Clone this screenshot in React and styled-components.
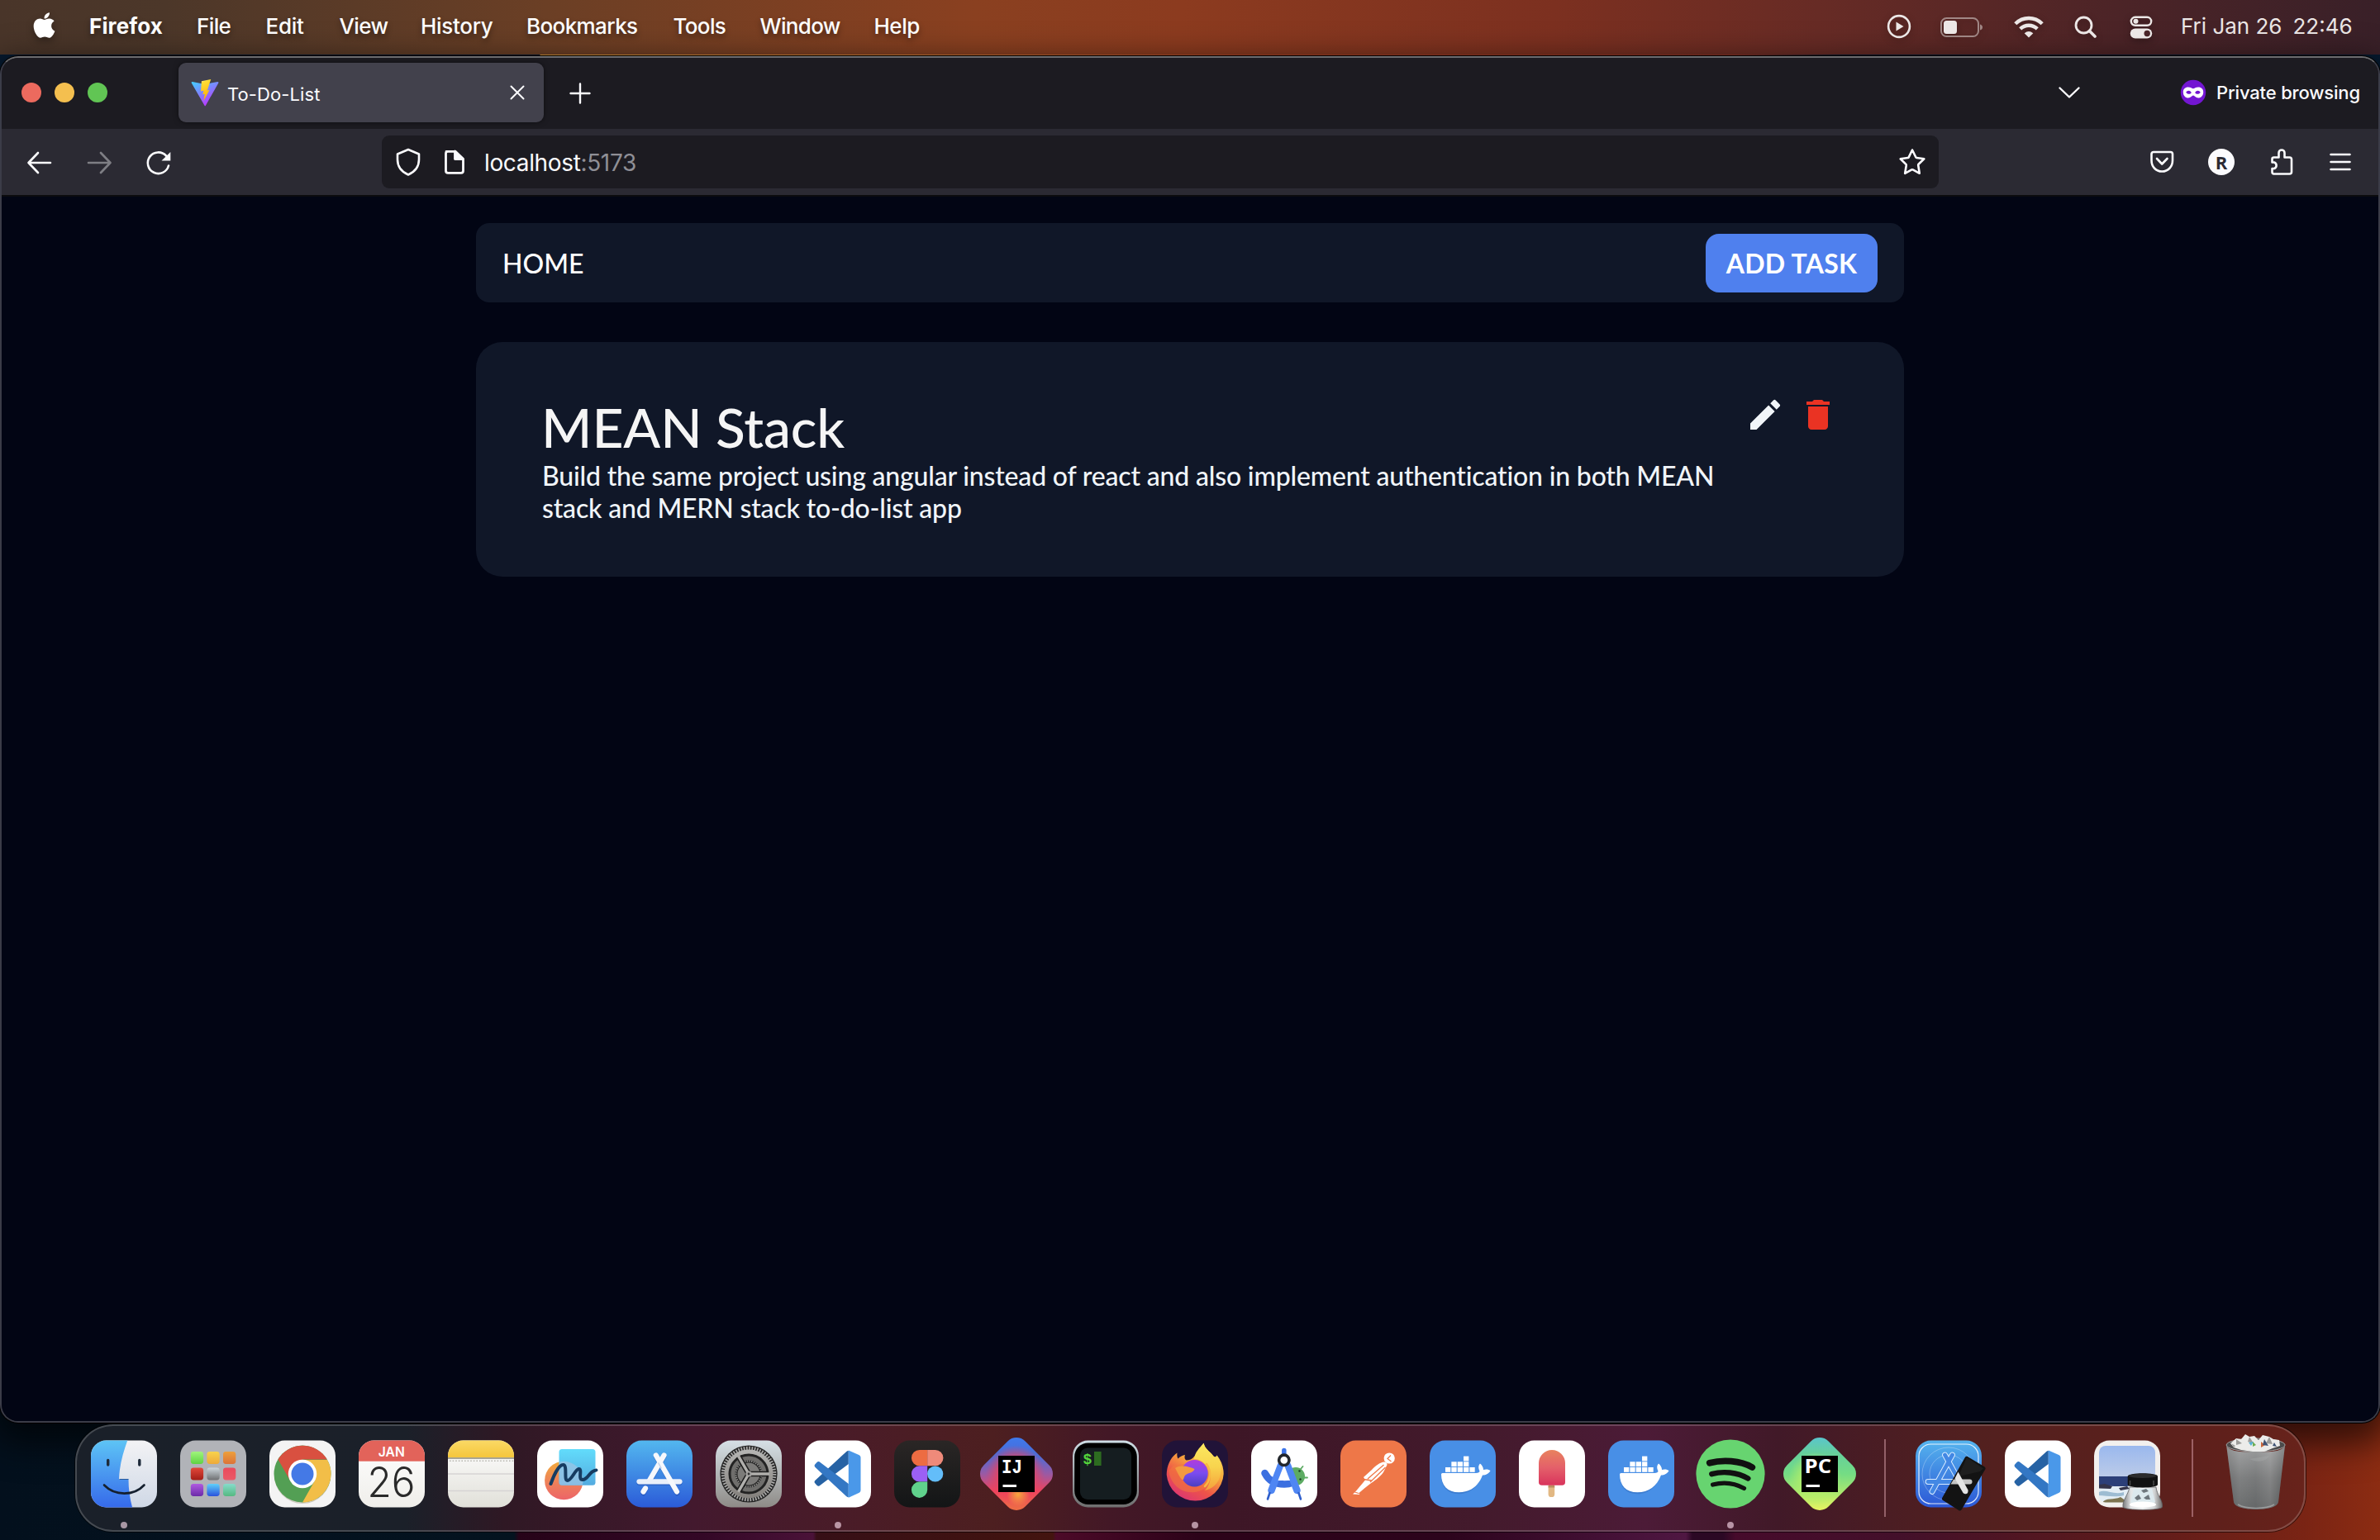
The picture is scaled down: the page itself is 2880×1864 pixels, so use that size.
import React from 'react';
import styled, { createGlobalStyle } from 'styled-components';
import { FaApple } from 'react-icons/fa';
import { MdEdit, MdDelete } from 'react-icons/md';

const GlobalStyle = createGlobalStyle`
  * { box-sizing: border-box; }
  html, body { margin: 0; padding: 0; background: #020515; }
  body { width: 2880px; height: 1864px; overflow: hidden; }
  svg { display: block; flex: none; }
`;

const Desktop = styled.div`
  display: flex;
  flex-direction: column;
  width: 2880px;
  height: 1864px;
  overflow: hidden;
  font-family: Inter, 'Liberation Sans', sans-serif;
  background:
    linear-gradient(90deg, #061a30 0 653px, #d9963a 654px, #d07a34 1100px, #a83e22 1500px, #8a2d20 2100px, #061a30 2230px) 0 0 / 100% 120px no-repeat,
    linear-gradient(90deg, #03101d 0, #04131f 622px, #260318 628px, #330826 850px, #4a1238 984px, #360f16 988px, #43140f 1274px, #4c0a28 1278px, #2c0319 1450px, #2c041c 1750px, #4f1742 2040px, #2b0824 2048px, #2b0824 2085px, #460b2b 2100px, #43102a 2300px, #5a1a1c 2550px, #7a2414 2790px, #8c2c12 2880px);
`;

/* ---------- menu bar ---------- */

const MenuBar = styled.header`
  display: flex;
  align-items: center;
  height: 66px;
  margin-bottom: 2px;
  flex: none;
  padding-left: 36px;
  color: #fff;
  background: linear-gradient(92deg, #493529 0, #4c3729 200px, #6b3f25 660px, #8a4020 1180px, #8c3b1f 1430px, #7c3020 1880px, #672b25 2200px, #4c2427 2560px, #392028 2880px);
`;

const MenuLogo = styled.div`
  width: 72px;
  height: 66px;
  padding-top: 13px;
  filter: drop-shadow(0 4px 5px rgba(0, 0, 0, 0.35));
`;

const MenuItem = styled.div`
  width: ${(p) => p.$w}px;
  margin-bottom: 2px;
  font-size: 26px;
  line-height: 64px;
  font-weight: ${(p) => (p.$strong ? 700 : 500)};
  letter-spacing: ${(p) => p.$ls}px;
  white-space: pre;
  text-shadow: 0 4px 7px rgba(0, 0, 0, 0.4);
`;

const StatusItems = styled.div`
  display: flex;
  align-items: center;
  margin-left: auto;
  height: 66px;
  color: #ece7e6;
`;

const StatusIcon = styled.div`
  width: ${(p) => p.$w}px;
  filter: drop-shadow(0 3px 4px rgba(0, 0, 0, 0.3));
`;

const Clock = styled.div`
  display: flex;
  width: 241px;
  margin-bottom: 3px;
  font-size: 26px;
  line-height: 60px;
  white-space: pre;
`;

const ClockPart = styled.span`
  width: ${(p) => p.$w}px;
`;

/* ---------- browser window ---------- */

const BrowserWindow = styled.main`
  display: flex;
  flex-direction: column;
  flex: none;
  height: 1654px;
  margin-bottom: 2px;
  border: 2px solid #3b3c48;
  border-top-color: #6c6c6f;
  border-radius: 22px;
  background: #1c1b21;
  box-shadow: 0 0 0 1px #000, 0 16px 40px 10px rgba(0, 0, 0, 0.6);
  overflow: hidden;
`;

const TabStrip = styled.div`
  display: flex;
  align-items: center;
  height: 86px;
  flex: none;
  padding: 0 22px 2px 24px;
  background: #1c1b21;
  color: #fbfbfe;
`;

const Lights = styled.div`
  display: flex;
  gap: 16px;
  width: 190px;
`;

const Light = styled.i`
  width: 24px;
  height: 24px;
  border-radius: 50%;
  background: ${(p) => p.$color};
`;

const Tab = styled.div`
  display: flex;
  align-items: center;
  width: 442px;
  height: 72px;
  padding: 0 21px 0 15px;
  border-radius: 9px;
  background: #42414c;
  box-shadow: 0 0 6px rgba(0, 0, 0, 0.5);
`;

const TabTitle = styled.span`
  flex: 1;
  padding: 4px 0 0 10px;
  font-size: 22px;
  letter-spacing: 0.1px;
`;

const NewTab = styled.div`
  margin-left: 31px;
  padding-top: 2px;
`;

const TabStripEnd = styled.div`
  display: flex;
  align-items: center;
  margin-left: auto;
`;

const BadgeBox = styled.div`
  margin-left: 119px;
`;

const PrivateLabel = styled.span`
  width: 174px;
  margin-left: 12px;
  font-size: 22px;
  font-weight: 500;
  letter-spacing: -0.17px;
  white-space: nowrap;
`;

const Toolbar = styled.div`
  display: flex;
  align-items: center;
  height: 82px;
  flex: none;
  padding: 0 30px 0 28px;
  background: #2b2a33;
  border-bottom: 2px solid #0c0c0f;
  color: #fbfbfe;
`;

const NavButtons = styled.div`
  display: flex;
  align-items: center;
  gap: 32px;
  width: 432px;
  padding-top: 2px;
`;

const UrlField = styled.div`
  display: flex;
  align-items: center;
  width: 1884px;
  height: 64px;
  padding: 0 12px;
  border-radius: 9px;
  background: #1c1b21;
`;

const Url = styled.span`
  flex: 1;
  margin-left: 12px;
  padding-top: 2px;
  font-size: 28px;
  letter-spacing: -0.35px;
`;

const Port = styled.span`
  color: #8f8f96;
`;

const Extensions = styled.div`
  display: flex;
  align-items: center;
  gap: 36px;
  margin-left: auto;
`;

const Avatar = styled.div`
  width: 32px;
  height: 32px;
  margin: 0 4px 0 1px;
  border-radius: 50%;
  background: #fbfbfe;
  color: #2b2a33;
  font: 700 22px/32px 'Open Sans', sans-serif;
  text-align: center;
`;

/* ---------- to-do page ---------- */

const Page = styled.section`
  flex: 1;
  display: flex;
  flex-direction: column;
  align-items: center;
  gap: 48px;
  padding-top: 32px;
  background: #020514;
  font-family: Lato, 'Liberation Sans', sans-serif;
  font-size: 32px;
  color: #f1f5f9;
`;

const NavBar = styled.nav`
  display: flex;
  align-items: center;
  justify-content: space-between;
  width: 1728px;
  height: 96px;
  padding: 0 32px;
  border-radius: 16px;
  background: #101728;
`;

const HomeLink = styled.a`
  padding-top: 2px;
  color: #fff;
  font-weight: 500;
  line-height: 48px;
`;

const AddButton = styled.button`
  width: 208px;
  height: 71px;
  padding: 2px 0 0;
  border: 0;
  border-radius: 16px;
  background: #4f80ee;
  color: #fff;
  font: 700 32px/48px Lato, sans-serif;
  letter-spacing: 0.25px;
  white-space: nowrap;
`;

const TaskCard = styled.article`
  display: flex;
  justify-content: space-between;
  width: 1728px;
  height: 284px;
  padding: 64px 80px;
  border-radius: 32px;
  background: #101728;
`;

const TaskText = styled.div`
  width: 1440px;
`;

const TaskTitle = styled.h1`
  margin: 0 0 1px -1px;
  font-size: 66px;
  line-height: 77px;
  font-weight: 500;
  letter-spacing: -0.15px;
  color: #f5f5f5;
`;

const TaskBody = styled.p`
  margin: 0;
  line-height: 39px;
  font-weight: 500;
  letter-spacing: -0.19px;
`;

const TaskActions = styled.div`
  display: flex;
  gap: 16px;
`;

/* ---------- dock ---------- */

const DockBar = styled.footer`
  display: flex;
  flex: none;
  width: 2699px;
  height: 130px;
  margin-left: 91px;
  padding: 4px 3px 0;
  border: 2px solid rgba(255, 255, 255, 0.19);
  border-radius: 46px;
  box-shadow: 0 0 0 1px rgba(0, 0, 0, 0.55);
  background: linear-gradient(90deg, #1a2029 0, #1b2029 400px, #2f1824 520px, #43192e 750px, #4a1c27 950px, #4d1f20 1110px, #431826 1250px, #3d1626 1400px, #431a2c 1700px, #4c1b37 1900px, #411928 2060px, #52201f 2300px, #5f201b 2600px, #68231b 2699px) border-box;
`;

const DockCell = styled.div`
  display: flex;
  flex-direction: column;
  align-items: center;
  width: 108px;
  height: 122px;
`;

const RunningDot = styled.i`
  width: 8px;
  height: 8px;
  margin-top: 4px;
  border-radius: 50%;
  background: rgba(255, 225, 240, 0.62);
`;

const DockDivider = styled.div`
  width: 2px;
  height: 94px;
  margin: 12px 22.5px 0 23.5px;
  background: rgba(225, 170, 180, 0.48);
`;

/* ---------- dock artwork (108 x 108 cells) ---------- */

const Art = ({ children }) => (
  <svg width="108" height="108" viewBox="0 0 108 108">{children}</svg>
);
const Tile = (props) => <rect x="14" y="13.5" width="80" height="81" rx="18.5" {...props} />;
const Grad = ({ id, from, to, mid }) => (
  <linearGradient id={id} x1="0" y1="0" x2="0" y2="1">
    <stop offset="0" stopColor={from} />
    {mid && <stop offset=".5" stopColor={mid} />}
    <stop offset="1" stopColor={to} />
  </linearGradient>
);

const Finder = () => (
  <Art>
    <defs>
      <Grad id="fiL" from="#5fc8f6" to="#3568ea" />
      <Grad id="fiR" from="#f3f3f5" to="#cfd8e6" />
      <clipPath id="fiC"><Tile /></clipPath>
    </defs>
    <Tile fill="url(#fiR)" />
    <path clipPath="url(#fiC)" fill="url(#fiL)" d="M10 10H59.5C54 25 48.5 42 48 60.5H59.5C59.5 72 61 84 64.500 96H10z" />
    <g stroke="#1e2a3a" strokeWidth="3.4" strokeLinecap="round" fill="none">
      <path d="M34.700 37.500V43M72.800 37.500V43" />
      <path stroke="#15202e" strokeWidth="2.6" d="M30 67.500C43 81 66 81 78.500 67.500" />
    </g>
    <path d="M48.500 60.500H59.500" stroke="#2a5a9a" strokeWidth="1" />
  </Art>
);

const launchColors = [
  ['#a0f47c', '#5fd343'], ['#f7d34c', '#eda93a'], ['#eda03c', '#dc7338'],
  ['#e2483a', '#a31e17'], ['#ccd6dc', '#6e7072'], ['#ea4a5c', '#ea5a68'],
  ['#b05ae0', '#6b2ba8'], ['#5fd0fa', '#2a52dc'], ['#86dccb', '#55b981'],
];
const Launchpad = () => (
  <Art>
    <Tile fill="#b1b3b8" />
    {launchColors.map(([a, b], i) => (
      <g key={i}>
        <defs><Grad id={`lp${i}`} from={a} to={b} /></defs>
        <rect x={26.8 + (i % 3) * 19.6} y={27 + Math.floor(i / 3) * 19.5} width="15.300" height="15" rx="3.400" fill={`url(#lp${i})`} />
      </g>
    ))}
  </Art>
);

const Chrome = () => (
  <Art>
    <Tile fill="#f4f4f4" />
    <circle cx="54" cy="56" r="34" fill="#8f8468" opacity=".35" />
    <circle cx="54" cy="54" r="34.500" fill="#539f54" />
    <path fill="#f2be48" d="M54 37H84A34.500 34.500 0 0 1 54 88.500L68.700 62.500z" />
    <path fill="#d95040" d="M24.500 36.500A34.500 34.500 0 0 1 83.800 36.500H54L39.300 62.500z" />
    <circle cx="54" cy="54" r="17.200" fill="#fff" />
    <circle cx="54" cy="54" r="13.500" fill="#4479e6" />
  </Art>
);

const Calendar = () => (
  <Art>
    <defs><clipPath id="caC"><Tile /></clipPath><Grad id="caB" from="#ffffff" to="#efeeea" /></defs>
    <Tile fill="url(#caB)" />
    <rect x="10" y="10" width="90" height="28.700" fill="#e2635a" clipPath="url(#caC)" />
    <text x="53.800" y="33.300" fontSize="16.500" fontWeight="600" textAnchor="middle" textLength="32" lengthAdjust="spacingAndGlyphs" fill="#fff" fontFamily="Inter">JAN</text>
    <text x="53.500" y="82" fontSize="50" fontWeight="300" textAnchor="middle" textLength="58" lengthAdjust="spacingAndGlyphs" fill="#2a2a2a" fontFamily="Inter">26</text>
  </Art>
);

const Notes = () => (
  <Art>
    <defs><clipPath id="noC"><Tile /></clipPath><Grad id="noB" from="#ffffff" to="#e1e0d9" /><Grad id="noY" from="#fbdc6c" to="#f5c63c" /></defs>
    <Tile fill="url(#noB)" />
    <g clipPath="url(#noC)">
      <rect x="10" y="10" width="90" height="24" fill="url(#noY)" />
      <rect x="10" y="34" width="90" height="2" fill="#a9a593" />
      <path d="M16 38.200H94" stroke="#b9b7b0" strokeWidth="1.600" strokeDasharray="1.600 2" />
      <path d="M10 54H98M10 74.500H98" stroke="#d6d4d4" strokeWidth="1.600" />
    </g>
  </Art>
);

const Freeform = () => (
  <Art>
    <defs><Grad id="frO" from="#f0aa3c" to="#ec6468" mid="#ee8458" /><Grad id="frB" from="#62dcfb" to="#54abe0" /></defs>
    <Tile fill="#fff" />
    <circle cx="46.300" cy="62" r="23.200" fill="url(#frO)" />
    <rect x="40.500" y="24" width="44" height="43.700" rx="3.500" fill="url(#frB)" />
    <path d="M40.500 39.600A23.200 23.200 0 0 1 68.800 67.700H44Q40.500 67.700 40.500 64z" fill="#9cc4e4" opacity=".75" />
    <path d="M30.500 66C34 56 40 43 45.500 43S46 62 50.500 62C56 62 60 48 64.500 48S63 61 69 61C76 61 77 50 85.500 49.500" fill="none" stroke="#163c62" strokeWidth="4" strokeLinecap="round" strokeLinejoin="round" />
  </Art>
);

const AppStore = () => (
  <Art>
    <defs><Grad id="asB" from="#53b7ef" to="#2b5bd8" /></defs>
    <Tile fill="url(#asB)" />
    <g stroke="#1c3f9a" strokeOpacity=".35" strokeWidth="6" strokeLinecap="round" transform="translate(0 1.500)">
      <path d="M29.500 63.500H78.500M49.800 31.500L75.500 76M59.500 31.500L42 62M37 71.500L34.500 76" />
    </g>
    <g stroke="#f6f8fc" strokeWidth="6.200" strokeLinecap="round">
      <path d="M59.500 31.500L41.500 62.500M37 71.500L34.500 75.500" />
      <path d="M29.500 63.300H78.500" stroke="#eaf0fa" />
      <path d="M49.800 31.500L75 75.500" />
    </g>
    <path d="M52.500 40.500L56.500 47.500" stroke="#c6d4ea" strokeWidth="1.500" />
  </Art>
);

const Settings = () => (
  <Art>
    <defs><Grad id="seB" from="#d6e0e6" to="#8e8b87" /><Grad id="seR" from="#b4b4b2" to="#85827e" /></defs>
    <Tile fill="url(#seB)" />
    <circle cx="54" cy="54" r="34.600" fill="#232323" />
    <circle cx="54" cy="54" r="31" fill="none" stroke="#a9a9a8" strokeWidth="4.500" strokeDasharray="1.700 1.546" />
    <circle cx="54" cy="54" r="27" fill="none" stroke="url(#seR)" strokeWidth="5" />
    <circle cx="54" cy="54" r="19" fill="none" stroke="#6f6e6c" strokeWidth="5" />
    <circle cx="54" cy="54" r="15.500" fill="none" stroke="#8b8a88" strokeWidth="2" strokeDasharray="1.500 1.200" />
    <circle cx="54" cy="54" r="13.500" fill="#7c7b79" />
    <path d="M54 54H78M54 54L42 33.200M54 54L42 74.800" stroke="#1f1f1f" strokeWidth="6.500" />
    <path d="M54 54H79M54 54L41.500 32.300M54 54L41.500 75.700" stroke="#b1b0ad" strokeWidth="3.400" />
    <circle cx="54" cy="54" r="3.600" fill="#a3a2a0" />
    <circle cx="54" cy="54" r="1.400" fill="#333" />
  </Art>
);

const VSCode = () => (
  <Art>
    <Tile fill="#fff" />
    <path fill="#2662a4" d="M66.800 26V42L31.500 68.500Q30 69.300 28.700 68L26 65Q25 63.500 26.300 62L64 27.200Q65.300 25.900 66.800 26z" />
    <path fill="#3377c4" d="M66.800 82.300V66L31.500 39.300Q30 38.500 28.700 39.800L26 42.800Q25 44.300 26.300 45.800L64 81Q65.300 82.300 66.800 82.300z" />
    <path fill="#4a98e9" d="M66.800 25.500L79.800 31.300Q81.500 32.200 81.500 34V74Q81.500 75.800 79.800 76.700L66.800 82.700z" />
  </Art>
);

const Figma = () => (
  <Art>
    <defs><Grad id="fgB" from="#2a2625" to="#131516" /></defs>
    <Tile fill="url(#fgB)" />
    <path fill="#ed6c42" d="M54.200 25H44.600A9.650 9.650 0 0 0 44.600 44.300H54.200z" />
    <path fill="#ef8a7a" d="M54.200 25H63.800A9.650 9.650 0 0 1 63.800 44.300H54.200z" />
    <path fill="#9b60f4" d="M54.200 44.300H44.600A9.650 9.650 0 0 0 44.600 63.600H54.200z" />
    <circle cx="63.700" cy="54" r="9.600" fill="#63bdf9" />
    <path fill="#60d28c" d="M54.200 63.600H44.600A9.650 9.650 0 1 0 54.200 73.300z" />
  </Art>
);

const Diamond = ({ fill }) => (
  <rect x="18.500" y="18.500" width="71" height="71" rx="15" fill={fill} transform="rotate(45 54 54)" />
);

const IntelliJ = () => (
  <Art>
    <defs>
      <linearGradient id="ijV" x1="0" y1="0" x2="1" y2="1">
        <stop offset="0" stopColor="#3a7df2" /><stop offset=".28" stopColor="#4c6bd6" /><stop offset=".5" stopColor="#9a5aa4" /><stop offset=".7" stopColor="#ec4460" /><stop offset="1" stopColor="#ee7a3c" />
      </linearGradient>
      <radialGradient id="ijG" gradientUnits="userSpaceOnUse" cx="56" cy="79" r="14"><stop offset="0" stopColor="#f6a83c" /><stop offset="1" stopColor="#f6a83c" stopOpacity="0" /></radialGradient>
      <radialGradient id="ijP" gradientUnits="userSpaceOnUse" cx="54" cy="56" r="36"><stop offset=".45" stopColor="#f04058" /><stop offset="1" stopColor="#f04058" stopOpacity="0" /></radialGradient>
    </defs>
    <Diamond fill="url(#ijV)" />
    <Diamond fill="url(#ijP)" />
    <circle cx="56" cy="79" r="14" fill="url(#ijG)" />
    <rect x="32" y="32" width="44" height="44" fill="#000" />
    <text x="36" y="53.400" fontSize="24" fontWeight="700" textLength="25" lengthAdjust="spacingAndGlyphs" fill="#fff" fontFamily="Liberation Mono">IJ</text>
    <rect x="37.500" y="67" width="16.500" height="3" fill="#fff" />
  </Art>
);

const PyCharm = () => (
  <Art>
    <defs>
      <linearGradient id="pcV" x1="0" y1="0" x2="1" y2="1">
        <stop offset="0" stopColor="#56c2dc" /><stop offset=".25" stopColor="#66d09c" /><stop offset=".5" stopColor="#74dc84" /><stop offset=".75" stopColor="#b0ea6c" /><stop offset="1" stopColor="#faf75e" />
      </linearGradient>
      <radialGradient id="pcG" gradientUnits="userSpaceOnUse" cx="54" cy="62" r="32"><stop offset=".5" stopColor="#b4ee68" stopOpacity=".8" /><stop offset="1" stopColor="#b4ee68" stopOpacity="0" /></radialGradient>
    </defs>
    <Diamond fill="url(#pcV)" />
    <Diamond fill="url(#pcG)" />
    <rect x="32" y="32" width="44" height="44" fill="#000" />
    <text x="35.500" y="53.400" fontSize="22.500" fontWeight="700" textLength="32.500" lengthAdjust="spacingAndGlyphs" fill="#fff" fontFamily="Open Sans">PC</text>
    <rect x="37.500" y="67" width="16.500" height="3" fill="#fff" />
  </Art>
);

const Terminal = () => (
  <Art>
    <defs><Grad id="teB" from="#cfdee6" to="#6e6e6e" /></defs>
    <Tile fill="url(#teB)" />
    <rect x="16.200" y="16.500" width="75.600" height="74.500" rx="16.500" fill="#000" />
    <rect x="23" y="22.500" width="62" height="62.500" rx="9" fill="#151d20" />
    <text x="26.500" y="41.800" fontSize="18" fontWeight="700" fill="#55d63c" fontFamily="Liberation Mono">$</text>
    <rect x="40" y="27" width="8.600" height="17" fill="#2d6c20" />
  </Art>
);

const Firefox = () => (
  <Art>
    <defs>
      <linearGradient id="ffB" gradientUnits="userSpaceOnUse" x1="78" y1="22" x2="36" y2="90">
        <stop offset="0" stopColor="#fbe65c" /><stop offset=".35" stopColor="#f7a93c" /><stop offset=".65" stopColor="#ee5448" /><stop offset="1" stopColor="#d8307c" />
      </linearGradient>
      <Grad id="ffP" from="#b03cdc" to="#4a3fc0" mid="#7a4cf0" />
      <Grad id="ffY" from="#fbe860" to="#f5a03c" mid="#f8d44e" />
    </defs>
    <Tile fill="#211338" />
    <path fill="url(#ffB)" d="M32.500 28.500C32 31.500 32.500 33.500 33.500 35.500C36 33 39 31.500 42 31C41 34 41.500 36.500 43.500 37.500C47 37.500 51 36 53 33C58 29 60 22 64.600 16.700C66 24 72 26.500 76 32C76.500 34 79.500 35.500 80.500 31.500C86 38 88.700 46 88.700 54A34.600 34.600 0 0 1 19.700 55C19.700 44 25 33 32.500 28.500z" />
    <path fill="url(#ffY)" d="M64.600 16.700C66 24 72 26.500 76 32C78 34.500 80 33 80.500 31.500C85 38 86.500 46 85 54C83 66 75 72 66 74C74 66 76 52 66 42C62 37 57 36 53 36C53.500 28 60 22 64.600 16.700z" />
    <path fill="#f07a3e" d="M22 50C25 66 36 78 54 76C66 75 74 66 72 54L66 42H40L28 44z" opacity=".55" />
    <circle cx="53.500" cy="53.200" r="16.200" fill="url(#ffP)" />
    <path fill="#f39a40" d="M30 47C38 42 48 46 53.500 48C52 53 46 52.500 43 55C40 57 41 62 38.500 61C35 58 33 52 30 47z" />
    <path fill="none" stroke="#f7b843" strokeWidth="2.500" strokeLinecap="round" d="M68 42C74 50 73 62 66 69" />
  </Art>
);

const AndroidStudio = () => (
  <Art>
    <Tile fill="#fff" />
    <circle cx="68" cy="57" r="11" fill="#5dab63" />
    <path d="M74 48L76.500 45M78 58.500L82 58.500" stroke="#5dab63" strokeWidth="1.800" strokeLinecap="round" />
    <circle cx="72.500" cy="50.500" r="1.200" fill="#1b3b22" /><circle cx="73.500" cy="60.500" r="1.200" fill="#1b3b22" />
    <path d="M30.500 53C36 64 45 66.500 54 66.500C58 66.500 61 66 63 65" fill="none" stroke="#3b6fe0" strokeWidth="8.500" strokeLinecap="round" />
    <path d="M53.800 25.500V31" stroke="#3c74ea" strokeWidth="5.500" strokeLinecap="round" />
    <g stroke="#4f86f3" strokeWidth="8.500" strokeLinecap="round"><path d="M50 43.500L38.500 74M58 43.500L69.500 74" /></g>
    <path d="M36.500 77L34 84.500M71.500 77L74 84.500" stroke="#2f5fcb" strokeWidth="2.600" strokeLinecap="round" />
    <path d="M53.800 43L46.500 62H61z" fill="#fff" />
    <circle cx="53.800" cy="37.300" r="6.200" fill="#fff" stroke="#22262c" strokeWidth="3.600" />
  </Art>
);

const Postman = () => (
  <Art>
    <Tile fill="#ee7748" />
    <circle cx="73.200" cy="35" r="6.600" fill="#fff" />
    <path d="M75 31.500L71 35.500L75.500 39" stroke="#ee7748" strokeWidth="1.200" fill="none" />
    <path fill="#fff" d="M67 39.500C69.500 39.500 70.500 41 70.500 43L66 52C62 58 54 63 50 66L43 71.500L36 77.500L37.500 79L29 78.500L33.500 74L44 61.500L42 58L52 49C57 43.500 62 40 67 39.500z" />
    <path d="M66.500 43L47 60M68.500 46L50 64M42 60.500L51.500 62M30 75.500L36 77.500" stroke="#ee7748" strokeWidth="1.300" fill="none" />
  </Art>
);

const Docker = () => (
  <Art>
    <Tile fill="#488fe6" />
    <g fill="#2f68b8" opacity=".45" transform="translate(0 2)">
      <path d="M28 53.300H76C75 66 63 76.300 49.500 76.300C35.500 76.300 28 68 28 53.300z" />
    </g>
    <g fill="#fff">
      {[0, 1, 2, 3, 4].map((i) => <rect key={i} x={33 + i * 7.350} y="46" width="6.300" height="5.800" />)}
      {[1, 2, 3].map((i) => <rect key={i} x={33 + i * 7.350} y="39.300" width="6.300" height="5.800" />)}
      <rect x="55.050" y="32.600" width="6.300" height="5.800" />
      <path d="M29.500 53H70C73 53 74.500 52 74.500 50.500C72.500 47 73 43.500 75 41.500C77.500 43.500 79 46 79 49C82 48 85.500 48.300 87.500 50C86 53.500 82 55.500 78 55.500C73 69 63 76.300 49.500 76.300C35.500 76.300 28 68 28 54.500Q28 53 29.500 53z" />
    </g>
  </Art>
);

const Popsicle = () => (
  <Art>
    <defs><Grad id="poB" from="#e8825e" to="#d9345c" mid="#e4606a" /></defs>
    <Tile fill="#fff" />
    <rect x="49.600" y="66" width="7.600" height="16" rx="3.600" fill="#e2b883" />
    <path d="M49.600 68H57.200V70.500H49.600z" fill="#b98d5f" />
    <path fill="url(#poB)" d="M38 41A16 16 0 0 1 70 41V64Q70 67.800 66.200 67.800H41.800Q38 67.800 38 64z" />
  </Art>
);

const Spotify = () => (
  <Art>
    <circle cx="54" cy="54" r="41.600" fill="#67d470" />
    <g fill="none" stroke="#111" strokeLinecap="round">
      <path strokeWidth="7.800" d="M28.800 40.800C44 36.500 66 37.500 80.300 46" />
      <path strokeWidth="6.400" d="M31.300 54.200C45 50.300 62 51.800 75.300 59.500" />
      <path strokeWidth="5.200" d="M32.600 67C45 63.800 59 65 70.500 71.500" />
    </g>
  </Art>
);

const Simulator = () => (
  <Art>
    <defs><Grad id="siB" from="#55b4ee" to="#2b57d6" /></defs>
    <Tile fill="url(#siB)" />
    <g fill="none" stroke="#fff">
      <rect x="18" y="18" width="72" height="72" rx="14.500" strokeWidth="1.200" strokeOpacity=".85" />
      <circle cx="54" cy="54" r="32" strokeWidth=".8" strokeOpacity=".35" />
      <circle cx="54" cy="54" r="23" strokeWidth=".8" strokeOpacity=".35" />
    </g>
    <g strokeLinecap="round">
      <path d="M58.500 31L34 75.500M49.500 31L74 75.500M29 63.500H78" stroke="#d7ebff" strokeWidth="6.800" />
      <path d="M58.500 31L34 75.500M49.500 31L74 75.500M29 63.500H78" stroke="#4388e4" strokeWidth="4.800" />
    </g>
    <path fill="#131313" stroke="#131313" strokeWidth="5" strokeLinejoin="round" d="M76 35.300L96 47.500L67.500 96L48.500 84z" />
    <path fill="#262626" d="M76 34L96 47.500L92 51L66 57z" opacity=".6" />
    <path fill="#c4c4c4" d="M60 60.500H79.500A3 3 0 0 1 79.500 66.500H56.500z" />
    <path fill="#e4e4e4" d="M65.500 51.500L77.500 73.500Q78 77.500 75 78.300Q73 78.500 71.500 77L61.500 59.500z" />
  </Art>
);

const Preview = () => (
  <Art>
    <defs>
      <clipPath id="prC"><rect x="20" y="20" width="68" height="68.500" rx="8" /></clipPath>
      <Grad id="prS" from="#9ab8ee" to="#bccbe8" />
      <linearGradient id="prJ" x1="0" x2="1" y1="0" y2="0">
        <stop offset="0" stopColor="#77797b" /><stop offset=".2" stopColor="#e2e4e5" /><stop offset=".5" stopColor="#f4f6f7" /><stop offset=".8" stopColor="#d2d4d5" /><stop offset="1" stopColor="#6e6c6b" />
      </linearGradient>
    </defs>
    <Tile fill="#f2f0ee" />
    <g clipPath="url(#prC)">
      <rect x="20" y="20" width="68" height="38" fill="url(#prS)" />
      <rect x="20" y="57" width="68" height="12" fill="#2c3f78" />
      <path d="M20 70C32 66 44 72 58 68V90H20z" fill="#e3edf4" />
      <path d="M20 67L27 66L36 69L34 72L20 71.500zM44 71L54 69L57 72L46 74z" fill="#34344a" />
      <path d="M20 76C28 72 38 80 50 76V80C38 83 28 80 20 80z" fill="#9dbcd2" />
      <path d="M24 89C28 82 38 86 46 82L56 89z" fill="#7d7450" />
    </g>
    <path fill="url(#prJ)" stroke="#5f6163" strokeWidth=".8" d="M57 70H89C90 80 97.500 86 96.500 94C96 98.500 50 98.500 49 94C48 86 55 80 57 70z" />
    <path fill="#dce9ee" d="M62 72H84L88 88C84 92 62 92 58 88z" />
    <path fill="#6f777d" d="M71 74L77 72L80 75L74 77zM63 83L68 79L71 84L66 86zM74 83L80 79L82 85L77 85z" />
    <ellipse cx="73" cy="91" rx="16" ry="3.600" fill="#fff" />
    <path fill="#111" d="M54.700 57C54.700 52 91 52 91 57V67C91 71.500 54.700 71.500 54.700 67z" />
    <ellipse cx="72.800" cy="56.300" rx="17" ry="2.600" fill="#2c2c2c" />
    <path d="M57.500 62V68M86 62V68" stroke="#484848" strokeWidth="1.500" />
  </Art>
);

const Trash = () => (
  <Art>
    <defs>
      <linearGradient id="trB" x1="0" x2="1" y1="0" y2="0">
        <stop offset="0" stopColor="#6c6d6e" /><stop offset=".22" stopColor="#858788" /><stop offset=".5" stopColor="#7b7d7e" /><stop offset=".75" stopColor="#8c8d8e" /><stop offset="1" stopColor="#626465" />
      </linearGradient>
      <Grad id="trS" from="#ffffff" to="#202424" mid="#707070" />
    </defs>
    <ellipse cx="53.600" cy="19" rx="35.500" ry="8" fill="#4b4b4b" stroke="#a2a3a3" strokeWidth="1" />
    <path fill="#ececea" d="M23 17L30 11L36 12L41 6L46 9L52 8L57 13L62 7L70 9L75 12L82 13L83 20L74 23L64 27L50 27L36 25L27 22z" />
    <path fill="#9c9c9a" d="M30 12L37 17L30 19zM46 9L51 17L44 15zM70 9L74 18L66 17zM24 17L29 20L27 22z" />
    <path fill="#56b0d4" d="M45 16L51 15L48 20z" />
    <path fill="#6cae54" d="M50 15L54 19L50 21z" />
    <path fill="#c8663a" d="M60 15L65 19L60 22z" />
    <path fill="#3f5374" d="M64 12L69 20L62 19zM76 16L79 21L74 20z" />
    <path fill="url(#trB)" d="M18.200 20C24 29 42 27 53.600 27S84 29 89 20L81 88C79.500 100 28.500 100 27 88z" />
    <path fill="url(#trS)" opacity=".25" d="M18.200 20C24 29 42 27 53.600 27S84 29 89 20L81 88C79.500 100 28.500 100 27 88z" />
    <path d="M32 91C42 97 66 97 76 91" stroke="#b5b8b9" strokeWidth="1.500" strokeOpacity=".6" fill="none" />
    <path d="M46 36C54 40 66 40 70 32" fill="#b0b2b3" opacity=".3" />
  </Art>
);

const pinnedApps = [
  [Finder, true], [Launchpad], [Chrome], [Calendar], [Notes], [Freeform], [AppStore], [Settings],
  [VSCode, true], [Figma], [IntelliJ], [Terminal], [Firefox, true], [AndroidStudio], [Postman],
  [Docker], [Popsicle], [Docker], [Spotify, true], [PyCharm],
];
const recentApps = [[Simulator], [VSCode], [Preview]];

const DockApps = ({ apps }) => apps.map(([Icon, running], i) => (
  <DockCell key={i}>
    <Icon />
    {running && <RunningDot />}
  </DockCell>
));

/* ---------- line icons ---------- */

const Line = ({ w, h, sw = 2.6, children, ...rest }) => (
  <svg width={w} height={h} viewBox={`0 0 ${w} ${h}`} fill="none" stroke="currentColor" strokeWidth={sw} strokeLinecap="round" strokeLinejoin="round" {...rest}>
    {children}
  </svg>
);

const Favicon = () => (
  <svg width="34" height="34" viewBox="0 0 34 34">
    <defs>
      <linearGradient id="vi1" x1="0" y1="0" x2=".6" y2="1"><stop offset="0" stopColor="#41d1ff" /><stop offset="1" stopColor="#bd34fe" /></linearGradient>
      <linearGradient id="vi2" x1=".4" y1="0" x2=".6" y2="1"><stop offset="0" stopColor="#ffea83" /><stop offset=".1" stopColor="#ffdd35" /><stop offset="1" stopColor="#ffa800" /></linearGradient>
    </defs>
    <path fill="url(#vi1)" d="M33.300 5.400L17.900 32.700Q17.200 33.800 16.500 32.700L.8 5.400Q.3 4 1.800 4.100L17.200 6.900L32.300 4.100Q33.800 4 33.300 5.400z" />
    <path fill="url(#vi2)" d="M24.200 1.100L12.900 3.300L12.100 15.400L15.300 14.700L14.400 19.300L16.800 18.700L15.300 27.300L22.500 13.900L19.800 14.400z" />
  </svg>
);

const PrivateBadge = () => (
  <BadgeBox>
    <svg width="32" height="32" viewBox="0 0 32 32">
      <circle cx="16" cy="16" r="15.200" fill="#7316d2" />
      <path fill="#fff" fillRule="evenodd" d="M10 9.500C13 9.500 14.500 11.200 16 11.200S19 9.500 22 9.500C26 9.500 28.200 12 28.200 15.500C28.200 19.800 25.500 22.500 22 22.500C19 22.500 17.500 19.500 16 19.500S13 22.500 10 22.500C6.500 22.500 3.800 19.800 3.800 15.500C3.800 12 6 9.500 10 9.500zM10.500 13.800C8.800 13.800 7.600 14.800 7.300 16C8.500 17.400 9.500 17.800 11 17.800S13.300 17 13.800 16.200C13.200 14.800 12.200 13.800 10.500 13.800zM21.500 13.800C19.800 13.800 18.800 14.800 18.200 16.200C18.700 17 19.500 17.800 21 17.800S23.500 17.400 24.700 16C24.400 14.800 23.200 13.800 21.500 13.800z" />
    </svg>
  </BadgeBox>
);

const menus = [
  ['Firefox', 130, 0.15, true], ['File', 83.5, -0.6], ['Edit', 89, -0.3], ['View', 98.5, -0.6], ['History', 128, -0.3],
  ['Bookmarks', 177.5, -0.6], ['Tools', 105, -0.65], ['Window', 138, -0.65], ['Help', 80, -0.5],
];

export default function App() {
  return (
    <>
      <GlobalStyle />
      <Desktop>
        <MenuBar>
          <MenuLogo><FaApple size={35} /></MenuLogo>
          {menus.map(([label, w, ls, strong]) => (
            <MenuItem key={label} $w={w} $strong={strong} $ls={ls}>{label}</MenuItem>
          ))}
          <StatusItems>
            <StatusIcon $w={64}>
              <Line w={30} h={32} sw={2.6}><circle cx="15" cy="15" r="12.900" /><path d="M11.500 9.500V20.500L20.500 15z" fill="currentColor" stroke="none" /></Line>
            </StatusIcon>
            <StatusIcon $w={89.5}>
              <svg width="54" height="26" viewBox="0 0 54 26">
                <rect x="2" y="2" width="45" height="22" rx="6.500" fill="none" stroke="currentColor" strokeOpacity=".5" strokeWidth="2" />
                <rect x="5" y="5" width="16" height="16" rx="3.500" fill="currentColor" />
                <path d="M49 9.500Q52 10.500 52 13T49 16.500z" fill="currentColor" fillOpacity=".5" />
              </svg>
            </StatusIcon>
            <StatusIcon $w={73}>
              <svg width="36" height="28" viewBox="0 0 36 28" fill="none" stroke="currentColor" strokeWidth="4.400">
                <path d="M1.800 9.800C10.800 .8 25.200 .8 34.200 9.800" />
                <path d="M7.700 15.800C13.500 10.300 22.500 10.300 28.300 15.800" />
                <path d="M18 26.500L12.700 21.200Q18 16.800 23.300 21.200z" fill="currentColor" stroke="none" />
              </svg>
            </StatusIcon>
            <StatusIcon $w={67}>
              <Line w={28} h={28} sw={2.8}><circle cx="11.500" cy="11.500" r="9.500" /><path d="M18.500 18.500L25 25" strokeWidth="3.600" /></Line>
            </StatusIcon>
            <StatusIcon $w={62.5}>
              <svg width="28" height="29" viewBox="0 0 28 29">
                <rect x="1.800" y="1.800" width="24.400" height="10" rx="5" fill="none" stroke="currentColor" strokeWidth="2.400" />
                <circle cx="7.500" cy="6.800" r="3" fill="currentColor" />
                <rect x="0.800" y="15.500" width="26.400" height="12" rx="6" fill="currentColor" />
                <circle cx="21.200" cy="21.500" r="3.700" fill="#4a2428" />
              </svg>
            </StatusIcon>
            <Clock>
              <ClockPart $w={135.5}>Fri Jan 26</ClockPart>
              <ClockPart>22:46</ClockPart>
            </Clock>
          </StatusItems>
        </MenuBar>

        <BrowserWindow>
          <TabStrip>
            <Lights>
              <Light $color="#ec6a5e" />
              <Light $color="#f4bf4f" />
              <Light $color="#61c554" />
            </Lights>
            <Tab>
              <Favicon />
              <TabTitle>To-Do-List</TabTitle>
              <Line w={22} h={22} sw={2}><path d="M3.500 3.500L18.500 18.500M18.500 3.500L3.500 18.500" /></Line>
            </Tab>
            <NewTab><Line w={26} h={26} sw={2.4}><path d="M13 1.500V24.500M1.500 13H24.500" /></Line></NewTab>
            <TabStripEnd>
              <Line w={30} h={16} sw={2.4}><path d="M3.500 2.500L15 13.500L26.500 2.500" /></Line>
              <PrivateBadge />
              <PrivateLabel>Private browsing</PrivateLabel>
            </TabStripEnd>
          </TabStrip>

          <Toolbar>
            <NavButtons>
              <Line w={38} h={32}><path d="M31 16H4.500M16 4L4.500 16L16 28" /></Line>
              <Line w={38} h={32} opacity=".4"><path d="M7 16H33.500M22 4L33.500 16L22 28" /></Line>
              <Line w={38} h={32}>
                <path d="M34 19.500A12.800 12.800 0 1 1 31 7.500L34.500 11" />
                <path d="M36.300 3V13.500H25.500z" fill="currentColor" stroke="none" />
              </Line>
            </NavButtons>
            <UrlField>
              <Line w={52} h={36}><path d="M20 3L33 8.500V15C33 23.500 28 30 20 33.500C12 30 7 23.500 7 15V8.500z" /></Line>
              <Line w={48} h={36} sw={2.8}><path d="M14.500 5H25.500L35 14V28.500Q35 31 32.500 31H16.500Q14 31 14 28.500V7.500Q14 5 16.500 5" transform="translate(-.5 .3)" /><path d="M24.500 5V14.500H34z" fill="currentColor" /></Line>
              <Url>localhost<Port>:5173</Port></Url>
              <Line w={40} h={36}><path d="M20 3.500L24.300 12.300Q24.600 12.900 25.300 13L34.300 14.300L27.600 20.800Q27.100 21.300 27.200 22L28.800 31.800L20.700 27.400Q20 27 19.300 27.400L11.200 31.800L12.800 22Q12.900 21.300 12.400 20.800L5.700 14.300L14.700 13Q15.400 12.900 15.700 12.300z" /></Line>
            </UrlField>
            <Extensions>
              <Line w={36} h={32}><path d="M7 4H27.500Q30 4 30 6.500V14C30 22 24.500 27.500 17.200 27.500S4.500 22 4.500 14V6.500Q4.500 4 7 4z" /><path d="M11 12L17.200 18.500L23.500 12" /></Line>
              <Avatar>R</Avatar>
              <Line w={36} h={36}><path d="M7.500 12.500H13.500V7A3.300 3.300 0 0 1 20.500 7V12.500H26.500Q29 12.500 29 15V30Q29 32.500 26.500 32.500H7.500Q5.500 32.500 5.500 30V26H8A4 4 0 0 0 8 18.500H5.500V14.500Q5.500 12.500 7.500 12.500z" /></Line>
              <Line w={32} h={24} sw={2.6}><path d="M4.500 3H27.500M4.500 12H27.500M4.500 21H27.500" /></Line>
            </Extensions>
          </Toolbar>

          <Page>
            <NavBar>
              <HomeLink>HOME</HomeLink>
              <AddButton>ADD TASK</AddButton>
            </NavBar>
            <TaskCard>
              <TaskText>
                <TaskTitle>MEAN Stack</TaskTitle>
                <TaskBody>
                  Build the same project using angular instead of react and also implement authentication in both MEAN stack and MERN stack to-do-list app
                </TaskBody>
              </TaskText>
              <TaskActions>
                <MdEdit size={48} color="#f1f5f9" />
                <MdDelete size={48} color="#ea3323" />
              </TaskActions>
            </TaskCard>
          </Page>
        </BrowserWindow>

        <DockBar>
          <DockApps apps={pinnedApps} />
          <DockDivider />
          <DockApps apps={recentApps} />
          <DockDivider />
          <DockApps apps={[[Trash]]} />
        </DockBar>
      </Desktop>
    </>
  );
}
